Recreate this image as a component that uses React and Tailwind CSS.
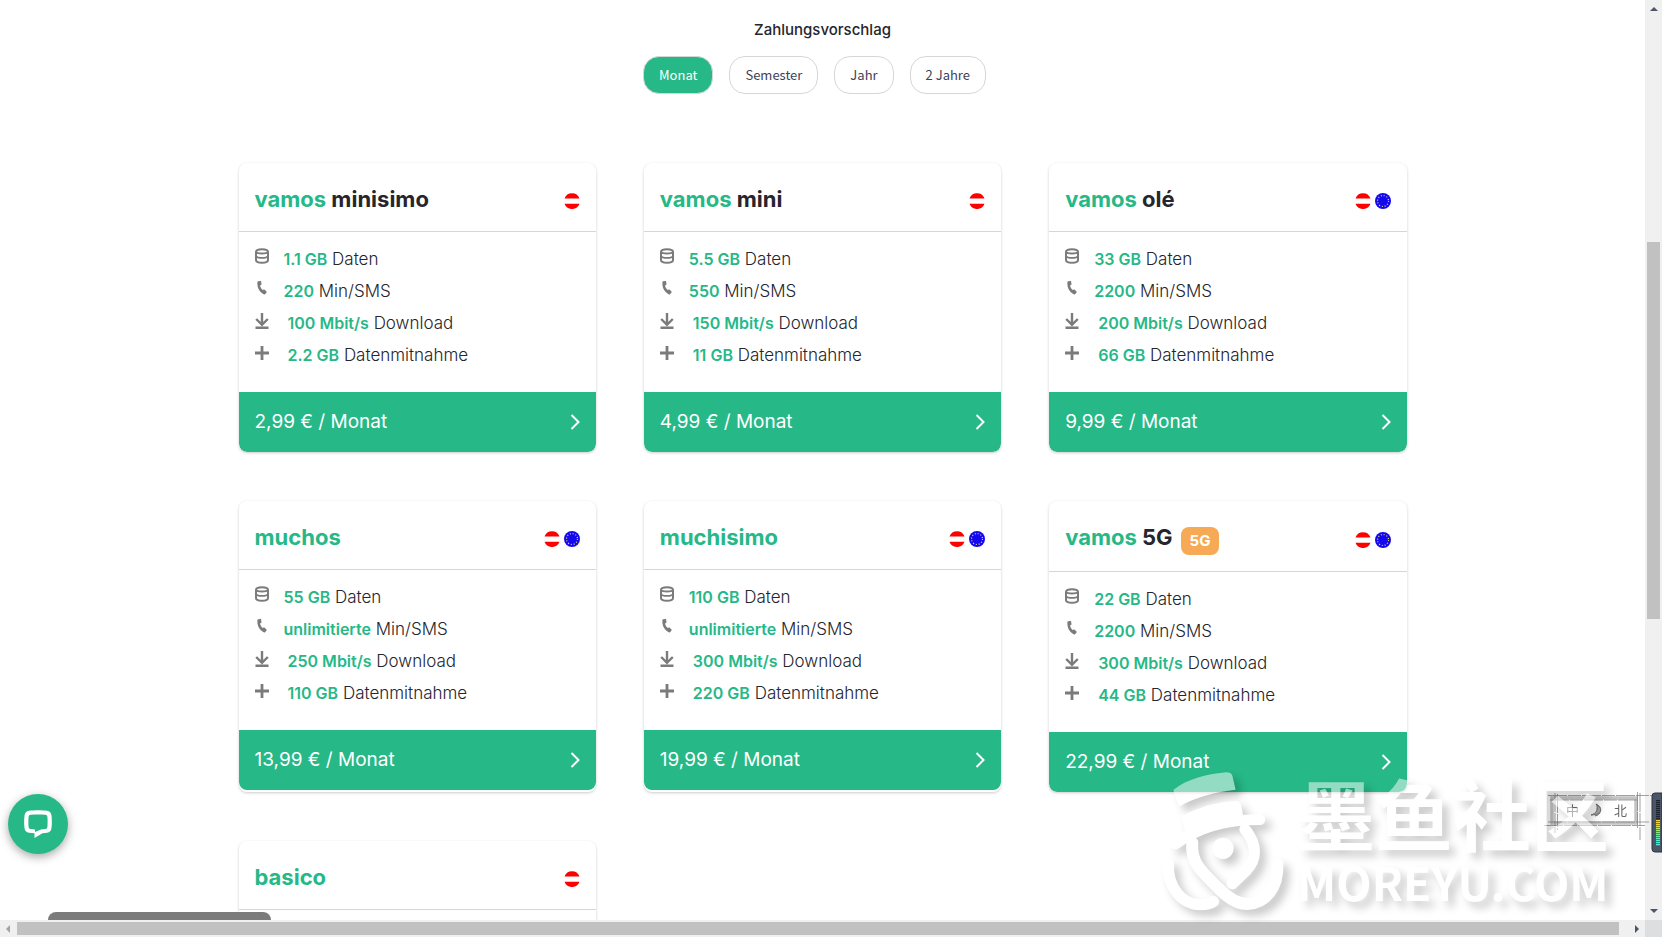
const TARIFFS = [
    { brand: "vamos", name: "minisimo", data: "1.1 GB", minutes: "220", speed: "100 Mbit/s", rollover: "2.2 GB", price: "2,99" },
    { brand: "vamos", name: "mini", data: "5.5 GB", minutes: "550", speed: "150 Mbit/s", rollover: "11 GB", price: "4,99" },
    { brand: "vamos", name: "olé", eu: true, data: "33 GB", minutes: "2200", speed: "200 Mbit/s", rollover: "66 GB", price: "9,99" },
    { brand: "muchos", name: "", eu: true, data: "55 GB", minutes: "unlimitierte", speed: "250 Mbit/s", rollover: "110 GB", price: "13,99" },
    { brand: "muchisimo", name: "", eu: true, data: "110 GB", minutes: "unlimitierte", speed: "300 Mbit/s", rollover: "220 GB", price: "19,99" },
    { brand: "vamos", name: "5G", badge: "5G", eu: true, data: "22 GB", minutes: "2200", speed: "300 Mbit/s", rollover: "44 GB", price: "22,99" },
    { brand: "basico", name: "" },
];

const PERIODS = ["Monat", "Semester", "Jahr", "2 Jahre"];

const METER_COLORS = [
    ...Array(10).fill("#1f2530"),
    "#f2d22e", "#f2d22e", "#f2d22e", "#d5e35a", "#b5e860", "#9be86a",
    "#86e87a", "#74e88c", "#66e8a4", "#5ce8b8", "#52e8cc", "#48e8d8", "#48e8e0",
];

const DatabaseIcon = () => (
    <svg width="14" height="16" viewBox="0 0 14 16" fill="none" stroke="#7b7b7b" strokeWidth="2">
        <path d="M1 4C1 0.300 13 0.300 13 4V12C13 15.700 1 15.700 1 12Z" />
        <path d="M1 4C2.500 6 11.500 6 13 4M1 8.200C2.500 10.400 11.500 10.400 13 8.200" strokeWidth="1.800" />
    </svg>
);

const PhoneIcon = () => (
    <svg width="14" height="16" viewBox="0 0 14 16" fill="#7b7b7b">
        <path d="M3.200 1.200 5.200 0.900c.5-.1.800.1.900.5l.4 2.700c.1.400-.1.700-.5.900l-1 .6c.4 1.900 1.300 3.300 2.600 4.500l1.100-.6c.4-.2.700-.1 1 .2l1.800 1.800c.3.300.3.700 0 1.100l-1.200 1.500c-.3.400-.7.500-1.200.3C4.900 12.600 1.900 8.100 2.400 2c0-.5.300-.8.800-.8Z" />
    </svg>
);

const DownloadIcon = () => (
    <svg className="mt-px" width="14" height="16" viewBox="0 0 14 16" fill="none" stroke="#7b7b7b" strokeWidth="2.400">
        <path d="M7 0v11.500M1.200 6 7 11.800 12.800 6M0.500 14.800h13" />
    </svg>
);

const PlusIcon = () => (
    <svg className="mt-[2px]" width="14" height="14" viewBox="0 0 14 14" fill="none" stroke="#7b7b7b" strokeWidth="2.800">
        <path d="M7 0v14M0 7h14" />
    </svg>
);

const AustriaFlag = () => (
    <svg width="16" height="16" viewBox="0 0 16 16" role="img" aria-label="Österreich">
        <circle cx="8" cy="8" r="8" fill="#fff" />
        <path d="M0.500 5.400a8 8 0 0 1 15 0ZM0.500 10.800a8 8 0 0 0 15 0Z" fill="#f00" />
    </svg>
);

const EuFlag = () => (
    <svg width="16" height="16" viewBox="0 0 16 16" role="img" aria-label="EU">
        <circle cx="8" cy="8" r="8" fill="#1408f0" />
        <circle cx="8" cy="8" r="5.500" fill="none" stroke="#e6dc6e" strokeWidth="1.200" strokeDasharray="1 1.880" />
    </svg>
);

const Feature = ({ icon, value, label, indent }) => (
    <li className="flex h-8">
        <span className="w-[29px] shrink-0 pt-[5px]">{icon}</span>
        <span className={indent ? "pl-1" : ""}>
            <span className="text-base leading-8 font-semibold text-[#26b887]">{value}</span> {label}
        </span>
    </li>
);

const TariffCard = ({ tariff }) => (
    <article className="overflow-hidden rounded-lg bg-white shadow-[0_1px_3px_rgba(0,0,0,0.2)]">
        <div className="flex items-center justify-between border-b border-[#d4d7d9] px-4 pt-5 pb-4">
            <h2 className="flex items-start text-[22px] leading-8 font-bold text-[#25252d]">
                <span>
                    <span className="text-[#26b887]">{tariff.brand}</span> {tariff.name}
                </span>
                {tariff.badge && (
                    <span className="mt-[6px] ml-2 rounded-lg bg-[#f6aa55] px-[9px] text-[15px] leading-7 text-white">
                        {tariff.badge}
                    </span>
                )}
            </h2>
            <div className="flex gap-1 pt-1">
                <AustriaFlag />
                {tariff.eu && <EuFlag />}
            </div>
        </div>
        <ul className="min-h-40 px-4 pt-[11px] pb-[21px] text-[17px] leading-8 font-light text-[#25252d]">
            {tariff.data && (
                <>
                    <Feature icon={<DatabaseIcon />} value={tariff.data} label="Daten" />
                    <Feature icon={<PhoneIcon />} value={tariff.minutes} label="Min/SMS" />
                    <Feature icon={<DownloadIcon />} value={tariff.speed} label="Download" indent />
                    <Feature icon={<PlusIcon />} value={tariff.rollover} label="Datenmitnahme" indent />
                </>
            )}
        </ul>
        {tariff.price && (
            <button type="button" className="flex h-[60px] w-full items-center justify-between rounded-b-lg bg-[#26b887] px-4 text-[19px] text-white">
                <span>{tariff.price} € / Monat</span>
                <svg width="10" height="16" viewBox="0 0 10 16" fill="none" stroke="#fff" strokeWidth="2">
                    <path d="m1.500 1 7 7-7 7" />
                </svg>
            </button>
        )}
    </article>
);

const PeriodPicker = () => (
    <div className="flex flex-col items-center">
        <h3 className="text-[15px] leading-5 font-medium text-[#25252d]">Zahlungsvorschlag</h3>
        <div className="mt-4 flex font-['Noto_Sans_CJK_SC',sans-serif] text-[13px]">
            {PERIODS.map((period, i) => (
                <button
                    key={period}
                    type="button"
                    className={
                        i === 0
                            ? "mr-4 h-[38px] rounded-2xl border border-[#d4d7d9] bg-[#26b887] px-[15px] text-white"
                            : "mr-4 h-[38px] rounded-2xl border border-[#d4d7d9] bg-white px-[15px] text-[#3c4257]"
                    }
                >
                    {period}
                </button>
            ))}
        </div>
    </div>
);

const VerticalScrollbar = () => (
    <div className="flex w-[17px] flex-col items-center bg-[#f0f0f0] py-[7px]">
        <svg width="8" height="4" viewBox="0 0 8 4" fill="#4a5568">
            <path d="M4 0 8 4H0Z" />
        </svg>
        <div className="flex w-full flex-1 flex-col items-center py-[6px]">
            <div className="flex-[225]" />
            <div className="w-[13px] flex-[376] bg-[#c1c1c1]" />
            <div className="flex-[284]" />
        </div>
        <svg width="8" height="4" viewBox="0 0 8 4" fill="#4a5568">
            <path d="M0 0h8L4 4Z" />
        </svg>
    </div>
);

const HorizontalScrollbar = () => (
    <div className="flex h-[17px] bg-[#f0f0f0]">
        <div className="flex flex-1 items-center px-[6px]">
            <svg width="4" height="8" viewBox="0 0 4 8" fill="#a3a3a3">
                <path d="M4 0v8L0 4Z" />
            </svg>
            <div className="mr-4 ml-[7px] h-[13px] flex-1 bg-[#c1c1c1]" />
            <svg width="4" height="8" viewBox="0 0 4 8" fill="#4a5568">
                <path d="M0 0v8l4-4Z" />
            </svg>
        </div>
        <div className="w-[17px] bg-[#dcdedf]" />
    </div>
);

const ChatButton = () => (
    <button
        type="button"
        aria-label="Chat"
        className="fixed bottom-[83px] left-2 flex size-[60px] items-center justify-center rounded-full bg-[#26b887] shadow-[0_3px_10px_rgba(0,0,0,0.35)]"
    >
        <svg width="28" height="28" viewBox="0 0 28 28">
            <path
                fill="#fff"
                fillRule="evenodd"
                d="M5 0.700C10 0 18 0 23 0.700Q27 1.200 27.500 5.500C28 10 28 14 27.500 18Q27 22.300 23 22.800L18.500 23.300 10.500 28V23.300L5 22.800Q1 22.300 0.500 18C0 14 0 10 0.500 5.500Q1 1.200 5 0.700ZM6.500 4.700Q4.800 4.900 4.600 6.700C4.300 10 4.300 14 4.600 17Q4.800 18.800 6.500 19L11 19.500V22L17 19.500 21.500 19Q23.200 18.800 23.400 17C23.700 14 23.700 10 23.400 6.700Q23.200 4.900 21.500 4.700C17 4.300 11 4.300 6.500 4.700Z"
            />
        </svg>
    </button>
);

// Input method bar, drawn as a pencil sketch
const InputMethodBar = () => (
    <svg className="fixed right-0 bottom-[77px]" width="118" height="75" viewBox="0 0 118 75" fill="none">
        <path d="M8 13h84v25H8Z" stroke="#a9a9a9" strokeWidth="3.500" opacity="0.700" />
        <path d="M4 10.500h106M6 15h88M0 40.500h102M4 37h102M11 8v40M13.500 9v36M93.500 7v36M96 8v47" stroke="#7a7a7a" strokeWidth="0.700" strokeDasharray="19 1 13 1" />
        <g fill="#666" fontFamily="'Noto Sans CJK SC', sans-serif" fontSize="13">
            <text x="22" y="30">中</text>
            <text x="70" y="30">北</text>
        </g>
        <path d="M52 19c7 3 7 11-5 11 6-2 8-6 5-11ZM53 20c6 3 4 10-2 11" fill="#aaa" stroke="#777" />
        <path d="M118 8h-7q-3 0-3 3v53q0 3 3 3h7Z" fill="#4a5568" stroke="#2d3440" />
        {METER_COLORS.map((color, i) => (
            <rect key={i} x="112" y={15 + i * 2} width="4" height="1.300" fill={color} />
        ))}
    </svg>
);

const Watermark = () => (
    <div className="pointer-events-none fixed right-[53px] bottom-[26px] flex items-end gap-3 opacity-50 drop-shadow-[6px_6px_4px_rgba(0,0,0,0.42)]">
        <svg width="124" height="140" viewBox="36 20 372 420" fill="none" stroke="#fff" strokeLinecap="round">
            <path fill="#fff" stroke="none" d="M73 77C110 45 180 28 232 24q14 0 18 10L260 76C200 82 140 98 90 127Z" />
            <path fill="#fff" stroke="none" d="M98 155C150 128 210 112 262 110q10 0 13 8L285 165 112 222Z" />
            <path d="M80 239C140 195 220 165 333 166" strokeWidth="32" />
            <path d="M130 235C124 290 150 315 215 378C250 412 275 419 295 419C350 416 388 370 385 300" strokeWidth="36" />
            <path d="M58 300C55 370 100 421 155 421Q180 421 193 412" strokeWidth="34" />
            <path d="M288 195C325 240 325 285 290 320L250 358" strokeWidth="34" />
            <circle cx="222" cy="252" r="32" fill="#fff" stroke="none" />
        </svg>
        <div className="font-['Noto_Sans_CJK_SC',sans-serif] font-bold text-white">
            <p className="text-[78px] leading-[78px]">墨鱼社区</p>
            <p className="text-[46px] leading-[60px]">MOREYU.COM</p>
        </div>
    </div>
);

export default function App() {
    return (
        <div className="flex h-screen flex-col overflow-hidden bg-white font-[Inter,sans-serif]">
            <div className="flex min-h-0 flex-1">
                <main className="min-w-0 flex-1 overflow-hidden px-8 pt-5">
                    <PeriodPicker />
                    <section className="mx-auto mt-[69px] grid max-w-[1168px] grid-cols-3 gap-x-12 gap-y-[49px]">
                        {TARIFFS.map((tariff) => (
                            <TariffCard key={tariff.brand + tariff.name} tariff={tariff} />
                        ))}
                    </section>
                </main>
                <VerticalScrollbar />
            </div>
            <HorizontalScrollbar />
            <div className="fixed bottom-[17px] left-12 h-2 w-[223px] rounded-t-lg bg-[#7b7b7b]" />
            <ChatButton />
            <InputMethodBar />
            <Watermark />
        </div>
    );
}
